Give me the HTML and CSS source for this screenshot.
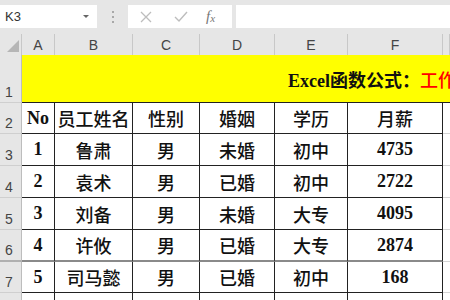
FILE: index.html
```html
<!DOCTYPE html>
<html lang="zh">
<head>
  <meta charset="UTF-8">
  <title>Excel</title>
  <link rel="stylesheet" href="styles.css">
</head>
<body>
  <div class="toolbar">
    <div class="namebox">
      <span>K3</span>
      <span class="caret"></span>
    </div>
    <div class="grip"><i></i><i></i><i></i></div>
    <div class="fxbox">
      <svg width="12" height="12" viewBox="0 0 12 12"><path d="M1 1L11 11M11 1L1 11" stroke="#bdbdbd" stroke-width="1.3" fill="none"/></svg>
      <svg width="14" height="12" viewBox="0 0 14 12"><path d="M1 6L5 10L13 1" stroke="#bdbdbd" stroke-width="1.4" fill="none"/></svg>
      <span class="fx">f<sub>x</sub></span>
    </div>
    <div class="formula"></div>
  </div>

  <div class="sheet">
    <!-- column headers -->
    <div class="corner"><svg width="12" height="12" viewBox="0 0 12 12"><polygon points="12,0 12,12 0,12" fill="#b6b6b6"/></svg></div>
    <div class="colhead">A</div>
    <div class="colhead">B</div>
    <div class="colhead">C</div>
    <div class="colhead">D</div>
    <div class="colhead">E</div>
    <div class="colhead">F</div>
    <div class="colhead"></div>

    <!-- row 1: title -->
    <div class="rowhead">1</div>
    <div class="title"><b>Excel函数公式：</b><b class="red">工作表</b></div>

    <!-- row 2: header -->
    <div class="rowhead">2</div>
    <div class="cell num">No</div>
    <div class="cell">员工姓名</div>
    <div class="cell">性别</div>
    <div class="cell">婚姻</div>
    <div class="cell">学历</div>
    <div class="cell">月薪</div>
    <div class="cell blank"></div>

    <div class="rowhead">3</div>
    <div class="cell num">1</div>
    <div class="cell">鲁肃</div>
    <div class="cell">男</div>
    <div class="cell">未婚</div>
    <div class="cell">初中</div>
    <div class="cell num">4735</div>
    <div class="cell blank"></div>

    <div class="rowhead">4</div>
    <div class="cell num">2</div>
    <div class="cell">袁术</div>
    <div class="cell">男</div>
    <div class="cell">已婚</div>
    <div class="cell">初中</div>
    <div class="cell num">2722</div>
    <div class="cell blank"></div>

    <div class="rowhead">5</div>
    <div class="cell num">3</div>
    <div class="cell">刘备</div>
    <div class="cell">男</div>
    <div class="cell">未婚</div>
    <div class="cell">大专</div>
    <div class="cell num">4095</div>
    <div class="cell blank"></div>

    <div class="rowhead gray">6</div>
    <div class="cell num gray">4</div>
    <div class="cell gray">许攸</div>
    <div class="cell gray">男</div>
    <div class="cell gray">已婚</div>
    <div class="cell gray">大专</div>
    <div class="cell num gray">2874</div>
    <div class="cell blank gray"></div>

    <div class="rowhead">7</div>
    <div class="cell num">5</div>
    <div class="cell">司马懿</div>
    <div class="cell">男</div>
    <div class="cell">已婚</div>
    <div class="cell">初中</div>
    <div class="cell num">168</div>
    <div class="cell blank"></div>

    <div class="rowhead"></div>
    <div class="cell"></div>
    <div class="cell"></div>
    <div class="cell"></div>
    <div class="cell"></div>
    <div class="cell"></div>
    <div class="cell"></div>
    <div class="cell blank"></div>
  </div>
</body>
</html>
```

FILE: styles.css
```css
/* Excel-like sheet */
body {
  margin: 0;
  width: 450px;
  height: 300px;
  overflow: hidden;
  background: #e6e6e6;
  font-family: "Liberation Sans", Arial, sans-serif;
}
.toolbar {
  height: 34px;
  display: flex;
  align-items: flex-start;
  padding-top: 5px;
  box-sizing: border-box;
}
.namebox {
  width: 97px;
  height: 23px;
  background: #fff;
  display: flex;
  align-items: center;
  justify-content: space-between;
  padding: 0 8px 0 5px;
  box-sizing: border-box;
  font-size: 13px;
  color: #333;
}
.caret {
  width: 0;
  height: 0;
  border-left: 3px solid transparent;
  border-right: 3px solid transparent;
  border-top: 3px solid #666;
}
.grip {
  width: 31px;
  height: 23px;
  display: flex;
  flex-direction: column;
  align-items: center;
  justify-content: center;
  gap: 3px;
}
.grip i {
  width: 2px;
  height: 2px;
  background: #a8a8a8;
}
.fxbox {
  width: 104px;
  height: 23px;
  background: #fff;
  display: flex;
  align-items: center;
  padding-left: 12px;
  gap: 22px;
  box-sizing: border-box;
}
.fx {
  font-family: "Liberation Serif", serif;
  font-style: italic;
  font-size: 15px;
  color: #777;
  margin-left: -4px;
}
.fx sub {
  font-size: 11px;
  vertical-align: -1px;
}
.formula {
  flex: 1;
  height: 23px;
  margin-left: 4px;
  background: #fff;
}
.sheet {
  display: grid;
  grid-template-columns: 22px 33px 78px 67px 75px 73px 95px 7px;
  grid-template-rows: 21px 48px 31px 32px 32px 32px 32px 31px 31px;
  background: #fff;
}
.corner, .colhead {
  background: #e6e6e6;
  border-right: 1px solid #c8c8c8;
  box-sizing: border-box;
}
.corner {
  display: flex;
  align-items: center;
  justify-content: center;
  padding: 2px 0 0 4px;
}
.colhead {
  display: flex;
  align-items: center;
  justify-content: center;
  font-size: 14px;
  color: #444;
}
.rowhead {
  background: #e6e6e6;
  border-right: 1px solid #bdbdbd;
  border-bottom: 1px solid #cfcfcf;
  box-sizing: border-box;
  display: flex;
  align-items: flex-end;
  padding: 0 0 2px 5px;
  font-size: 14px;
  color: #444;
}
.title {
  grid-column: 2 / 9;
  background: #ffff00;
  border-bottom: 1px solid #222;
  box-sizing: border-box;
  display: flex;
  align-items: center;
  padding-left: 266px;
  white-space: nowrap;
  overflow: hidden;
  font-family: "Liberation Serif", "Noto Sans CJK SC", serif;
  font-size: 18px;
  color: #111;
}
.title .red {
  color: #ff0000;
  font-weight: 500;
}
.cell {
  border-right: 1px solid #222;
  border-bottom: 1px solid #222;
  box-sizing: border-box;
  display: flex;
  align-items: center;
  justify-content: center;
  font-family: "Noto Sans CJK SC", serif;
  font-size: 18px;
  font-weight: 500;
  color: #111;
  white-space: nowrap;
  overflow: hidden;
}
.cell.num {
  font-family: "Liberation Serif", serif;
  font-weight: bold;
}
.cell.blank {
  border-right: none;
  border-bottom: 1px solid #d4d4d4;
}
.gray {
  border-bottom: 2px solid #8a8a8a;
}
.rowhead.gray {
  border-bottom: 2px solid #b0b0b0;
}
```
